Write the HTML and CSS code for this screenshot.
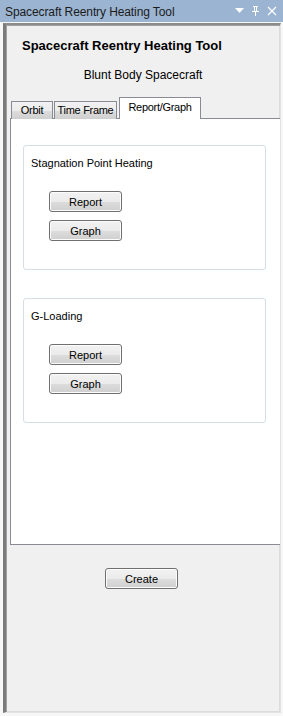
FILE: index.html
```html
<!DOCTYPE html>
<html>
<head>
    <title>Spacecraft Reentry Heating Tool</title>
    <meta http-equiv="Content-Type" content="text/html; charset=UTF-8">
    <link rel="stylesheet" href="styles.css">
</head>
<body>
    <div class="titlebar">
        <span class="title">Spacecraft Reentry Heating Tool</span>
        <div class="title-icons">
            <svg width="9" height="6" viewBox="0 0 9 6"><path d="M0 0 H9 L4.5 5 Z" fill="#fff"/></svg>
            <svg width="9" height="10" viewBox="0 0 9 10"><path d="M2 0 H7 V1 H6 V5 H8 V6 H5 V10 H4 V6 H1 V5 H3 V1 H2 Z M4 1 V5 H5 V1 Z" fill="#fff"/></svg>
            <svg width="10" height="10" viewBox="0 0 10 10"><path d="M1 1 L9 9 M9 1 L1 9" stroke="#fff" stroke-width="1.2"/></svg>
        </div>
    </div>
    <div class="panel">
        <h1>Spacecraft Reentry Heating Tool</h1>
        <p class="subtitle">Blunt Body Spacecraft</p>

        <div class="tabs">
            <div class="tab tab-orbit">Orbit</div>
            <div class="tab tab-time">Time Frame</div>
            <div class="tab active">Report/Graph</div>
        </div>
        <div class="tab-page">
            <div class="group">
                <div class="group-label">Stagnation Point Heating</div>
                <div class="group-buttons">
                    <button>Report</button>
                    <button>Graph</button>
                </div>
            </div>
            <div class="group">
                <div class="group-label">G-Loading</div>
                <div class="group-buttons">
                    <button>Report</button>
                    <button>Graph</button>
                </div>
            </div>
        </div>

        <div class="create-row">
            <button>Create</button>
        </div>
    </div>
</body>
</html>
```
FILE: styles.css
```css
* {
    box-sizing: border-box;
}
html, body {
    margin: 0;
    padding: 0;
}
body {
    width: 283px;
    height: 716px;
    background: #f7f7f7;
    font-family: "Liberation Sans", Arial, sans-serif;
    font-size: 11px;
    color: #000;
}

.titlebar {
    height: 22px;
    background: #9bb4d1;
    display: flex;
    align-items: center;
    justify-content: space-between;
    padding: 0 6px 0 5px;
}
.title {
    font-size: 12px;
    color: #1b1b1b;
    padding-top: 1px;
    letter-spacing: -0.1px;
}
.title-icons {
    display: flex;
    align-items: center;
    gap: 7px;
}

.panel {
    margin: 1px 2px 0 3px;
    height: 690px;
    background: #f0f0f0;
    border-top: 2px solid #8c8c8c;
    border-left: 3px solid #7b7b7b;
    border-right: 1px solid #e3e3e3;
    border-bottom: 1px solid #e3e3e3;
    box-shadow: inset 1px 1px 0 #a0a0a0, inset -1px -1px 0 #dcdcdc;
    display: flex;
    flex-direction: column;
}

h1 {
    margin: 13px 0 0 16px;
    font-size: 13px;
    font-weight: bold;
    line-height: 16px;
}
.subtitle {
    margin: 13px 0 0 0;
    text-align: center;
    font-size: 12px;
    line-height: 16px;
}

.tabs {
    display: flex;
    align-items: flex-end;
    margin: 14px 0 0 5px;
    height: 22px;
    position: relative;
    z-index: 1;
}
.tab {
    height: 18px;
    line-height: 17px;
    text-align: center;
    letter-spacing: -0.3px;
    border: 1px solid #898c95;
    border-bottom: none;
    background: linear-gradient(#f2f2f2, #ebebeb 50%, #dddddd 51%, #cfcfcf);
    margin-right: 1px;
}
.tab-orbit {
    width: 42px;
}
.tab-time {
    width: 63px;
}
.tab.active {
    width: 82px;
    height: 22px;
    line-height: 18px;
    background: #fff;
    margin-left: 1px;
}

.tab-page {
    flex: 0 0 auto;
    height: 427px;
    margin: -1px 0 0 4px;
    background: #fff;
    border: 1px solid #898c95;
    border-right: none;
    padding: 26px 14px 0 12px;
    display: flex;
    flex-direction: column;
    gap: 28px;
}

.group {
    height: 125px;
    border: 1px solid #d5dfe5;
    border-radius: 3px;
    padding: 11px 7px 0 7px;
}
.group-label {
    line-height: 13px;
}
.group-buttons {
    margin: 21px 0 0 18px;
    display: flex;
    flex-direction: column;
    align-items: flex-start;
    gap: 8px;
}

button {
    width: 73px;
    height: 21px;
    padding: 0;
    font-family: "Liberation Sans", Arial, sans-serif;
    font-size: 11px;
    color: #000;
    border: 1px solid #707070;
    border-radius: 3px;
    box-shadow: inset 0 0 0 1px #fcfcfc;
    background: linear-gradient(#f2f2f2, #ebebeb 50%, #dddddd 51%, #cfcfcf);
}

.create-row {
    margin-top: 23px;
    padding-left: 99px;
}
```
